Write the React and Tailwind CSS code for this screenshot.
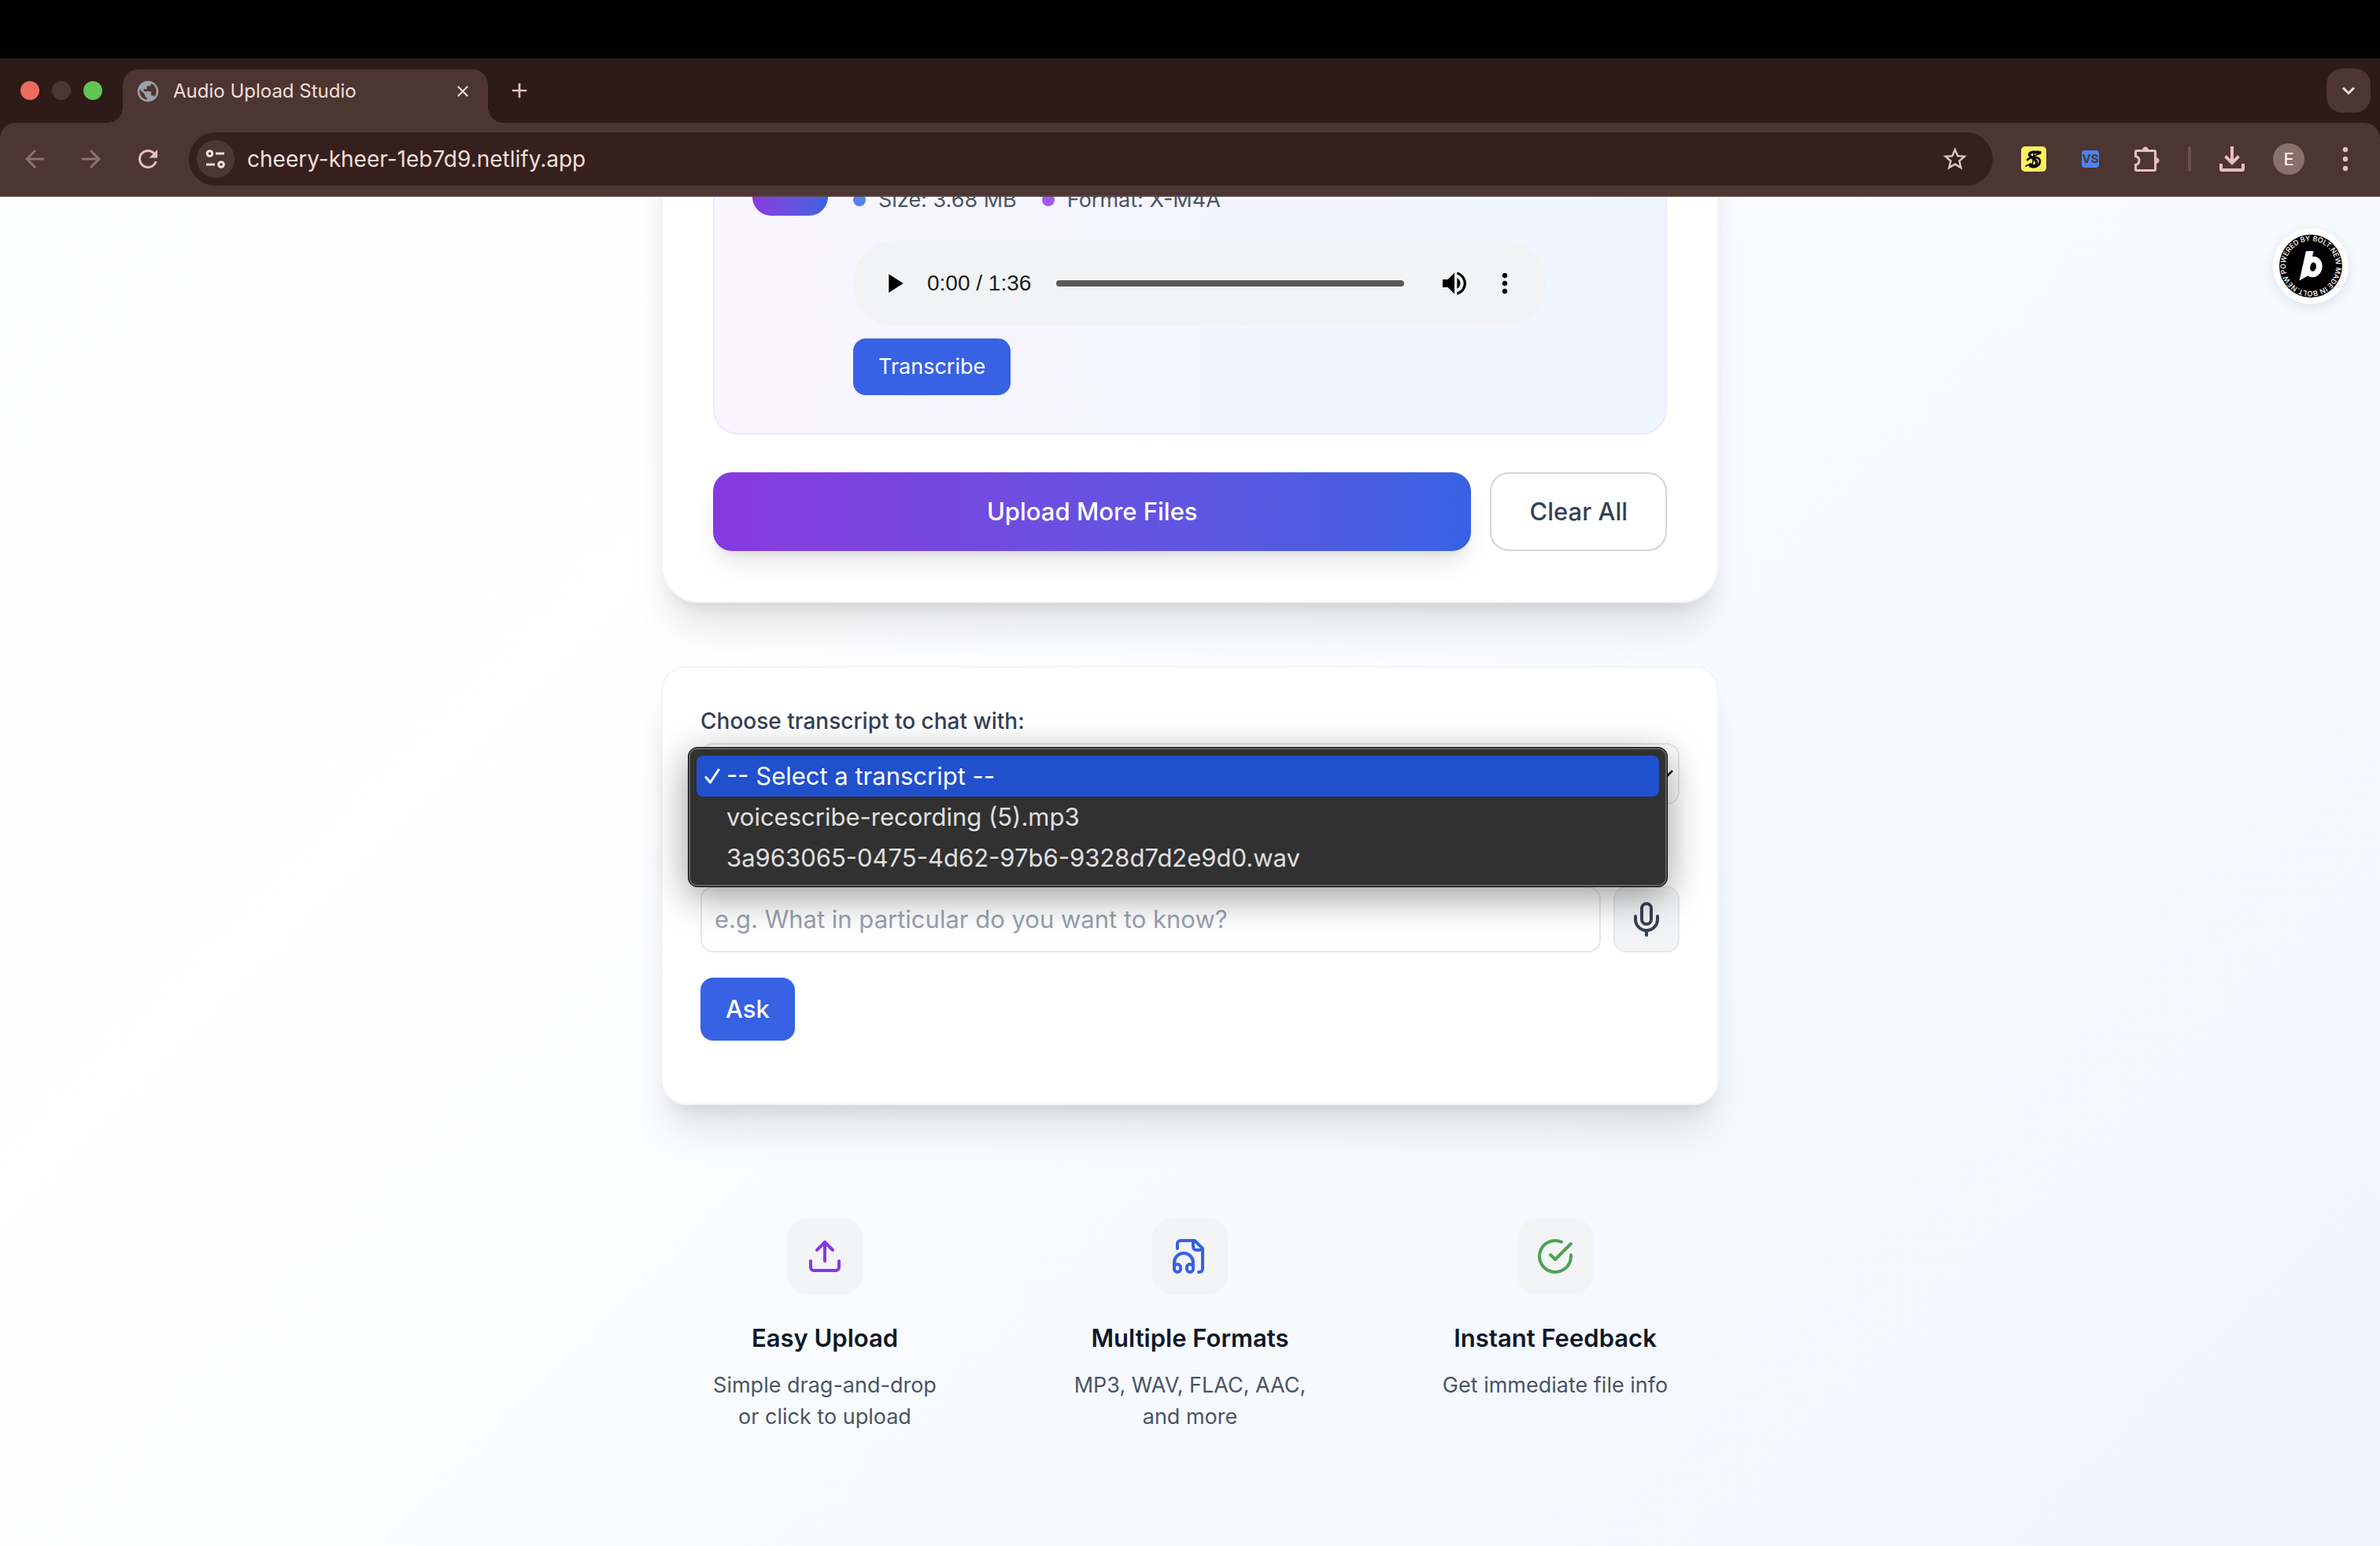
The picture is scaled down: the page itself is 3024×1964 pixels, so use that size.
import { useState } from "react";
import {
  MdAdd,
  MdArrowBack,
  MdArrowForward,
  MdClose,
  MdMoreVert,
  MdPlayArrow,
  MdPublic,
  MdRefresh,
  MdStarBorder,
  MdVolumeUp,
} from "react-icons/md";

const transcripts = [
  "-- Select a transcript --",
  "voicescribe-recording (5).mp3",
  "3a963065-0475-4d62-97b6-9328d7d2e9d0.wav",
];

function LineIcon({ className, children }) {
  return (
    <svg
      viewBox="0 0 24 24"
      fill="none"
      stroke="currentColor"
      strokeWidth="2"
      strokeLinecap="round"
      strokeLinejoin="round"
      className={className}
      aria-hidden="true"
    >
      {children}
    </svg>
  );
}

const features = [
  {
    title: "Easy Upload",
    lines: ["Simple drag-and-drop", "or click to upload"],
    icon: (
      <LineIcon className="size-12 text-[#8838e0]">
        <path d="M21 15v4a2 2 0 0 1-2 2H5a2 2 0 0 1-2-2v-4" />
        <path d="M17 8l-5-5-5 5" />
        <path d="M12 3v12" />
      </LineIcon>
    ),
  },
  {
    title: "Multiple Formats",
    lines: ["MP3, WAV, FLAC, AAC,", "and more"],
    icon: (
      <LineIcon className="size-12 text-[#3762e3]">
        <path d="M17.5 22h.5a2 2 0 0 0 2-2V7l-5-5H6a2 2 0 0 0-2 2v3" />
        <path d="M14 2v4a2 2 0 0 0 2 2h4" />
        <path d="M2 19a2 2 0 1 1 4 0v1a2 2 0 1 1-4 0v-4a6 6 0 0 1 12 0v4a2 2 0 1 1-4 0v-1a2 2 0 1 1 4 0" />
      </LineIcon>
    ),
  },
  {
    title: "Instant Feedback",
    lines: ["Get immediate file info"],
    icon: (
      <LineIcon className="size-12 text-[#4ea354]">
        <path d="M22 11.08V12a10 10 0 1 1-5.93-9.14" />
        <path d="m9 11 3 3L22 4" />
      </LineIcon>
    ),
  },
];

function TabStrip() {
  return (
    <div className="flex h-[82px] items-end pl-[26px] pr-3">

      {/* WINDOW BUTTONS */}
      <div className="flex items-center gap-4 self-center">
        <button aria-label="Close window" className="size-6 rounded-full bg-[#ed6a5e]" />
        <button aria-label="Minimize window" className="size-6 rounded-full bg-[#4a3735]" />
        <button aria-label="Zoom window" className="size-6 rounded-full bg-[#61c554]" />
      </div>

      {/* ACTIVE TAB */}
      <span className="ml-1.5 size-5 bg-[radial-gradient(circle_at_0_0,transparent_20px,#4d3531_20px)]" />
      <div className="flex h-[68px] w-[464px] items-center rounded-t-[20px] bg-[#4d3531] pb-3 pl-4 pr-5">
        <MdPublic className="size-8 text-[#9aa0a6]" />
        <span className="ml-4 flex-1 text-[24px] leading-8 text-[#f3dfdb]">
          Audio Upload Studio
        </span>
        <button aria-label="Close tab" className="text-[#f3dfdb]">
          <MdClose className="size-6" />
        </button>
      </div>
      <span className="size-5 bg-[radial-gradient(circle_at_100%_0,transparent_20px,#4d3531_20px)]" />

      <button aria-label="New tab" className="ml-1 self-center text-[#e6c1ba]">
        <MdAdd className="size-8" />
      </button>

      <button
        aria-label="Search tabs"
        className="ml-auto flex size-14 items-center justify-center self-center rounded-[20px] bg-[#4d3531] text-[#f3dfdb]"
      >
        <svg viewBox="0 0 20 20" fill="none" stroke="currentColor" strokeWidth="3" className="size-5">
          <path d="M3 6.5l7 7 7-7" />
        </svg>
      </button>
    </div>
  );
}

function Toolbar() {
  return (
    <div className="flex h-[94px] items-center rounded-t-[20px] border-b-2 border-[#544543] bg-[#4d3531] px-[26px] text-[#e6c1ba]">
      <div className="flex items-center gap-9">
        <button aria-label="Back" className="text-[#8d716c]">
          <MdArrowBack className="size-9" />
        </button>
        <button aria-label="Forward" className="text-[#8d716c]">
          <MdArrowForward className="size-9" />
        </button>
        <button aria-label="Reload">
          <MdRefresh className="size-9" />
        </button>
      </div>

      {/* ADDRESS BAR */}
      <div className="ml-[34px] flex h-[68px] flex-1 items-center rounded-full bg-[#36201e] pl-2.5 pr-[30px] text-[#f3dfdb]">
        <button
          aria-label="Site information"
          className="flex size-12 items-center justify-center rounded-full bg-[#4d3531]"
        >
          <svg viewBox="0 0 26 26" fill="none" stroke="currentColor" strokeWidth="3" className="size-[26px]">
            <circle cx="5.5" cy="6" r="3.3" />
            <path d="M13 6h11M1 20h11" />
            <circle cx="20" cy="20" r="3.3" />
          </svg>
        </button>
        <input
          aria-label="Address"
          readOnly
          value="cheery-kheer-1eb7d9.netlify.app"
          className="ml-4 flex-1 bg-transparent text-[28px] leading-10 outline-none"
        />
        <button aria-label="Bookmark this page" className="text-[#dbc7c4]">
          <MdStarBorder className="size-9" />
        </button>
      </div>

      {/* EXTENSIONS */}
      <div className="ml-9 flex items-center gap-10">
        <button aria-label="Scribe extension">
          <svg viewBox="0 0 32 32" className="size-8">
            <rect width="32" height="32" rx="5" fill="#fcee62" />
            <g fill="none" stroke="#0b0b0b" strokeLinecap="round">
              <path d="M24 8c-5 1-9-3-13 1-3 4 9 7 9 12 0 4-6 5-8 2" strokeWidth="3.4" />
              <path d="M8 17c5-5 16-4 16 2 0 5-6 9-13 6" strokeWidth="2.6" />
              <path d="M17 6l-3 19M12 14l12-5M6 25l6-3M20 6l5 1" strokeWidth="1.6" />
            </g>
          </svg>
        </button>
        <button aria-label="VS extension" className="flex size-8 items-center justify-center">
          <span className="flex size-[22px] items-center justify-center rounded-[4px] bg-[#4a83f2] text-[15px] leading-5 font-bold text-[#4d3531]">
            VS
          </span>
        </button>
        <button aria-label="Extensions">
          <svg viewBox="0 0 32 32" fill="none" stroke="currentColor" strokeWidth="3" className="size-8">
            <path d="M1.5 12.5V7Q1.5 5.5 3 5.5H25Q26.5 5.5 26.5 7V29Q26.5 30.5 25 30.5H3Q1.5 30.5 1.5 29V23.5C7.5 22 7.5 14 1.5 12.5Z" />
            <path d="M10 5a4 4.5 0 0 1 8 0zM27 14a4.5 4 0 0 1 0 8z" fill="currentColor" stroke="none" />
          </svg>
        </button>
      </div>
      <span className="mx-9 h-8 w-1 rounded-full bg-[#6b514d]" />
      <button aria-label="Downloads">
        <svg viewBox="0 0 32 32" fill="none" stroke="currentColor" strokeWidth="4" className="size-8">
          <path d="M16 0v20M7.5 12.5l8.5 8.5 8.5-8.5M2 22v6.5q0 1.5 1.5 1.5h25q1.5 0 1.5-1.5V22" />
        </svg>
      </button>
      <button
        aria-label="Profile"
        className="ml-9 flex size-10 items-center justify-center rounded-full bg-[#897069] text-[22px] leading-8 text-white"
      >
        E
      </button>
      <button aria-label="Browser menu" className="ml-[34px] flex w-9 justify-center">
        <svg viewBox="0 0 8 32" fill="currentColor" className="h-8 w-2">
          <circle cx="4" cy="4" r="3.2" />
          <circle cx="4" cy="16" r="3.2" />
          <circle cx="4" cy="28" r="3.2" />
        </svg>
      </button>
    </div>
  );
}

function AudioPlayer() {
  return (
    <div className="flex h-[108px] w-full max-w-[880px] items-center rounded-full bg-[#f1f3f4] px-8 text-black">
      <button aria-label="Play">
        <MdPlayArrow className="size-10" />
      </button>
      <span className="ml-[22px] font-['Liberation_Sans',sans-serif] text-[28px] leading-10 text-[#1c1c1c]">
        0:00 / 1:36
      </span>
      <input
        type="range"
        aria-label="Seek"
        defaultValue={0}
        className="ml-8 h-2 min-w-0 flex-1 appearance-none rounded-full bg-[#5a5a5a] [&::-webkit-slider-thumb]:appearance-none"
      />
      <button aria-label="Mute" className="ml-11">
        <MdVolumeUp className="size-10" />
      </button>
      <button aria-label="Player options" className="ml-6">
        <MdMoreVert className="size-10" />
      </button>
    </div>
  );
}

function UploadCard() {
  return (
    <section className="rounded-[48px] border-2 border-gray-100 bg-white p-16 shadow-[0_40px_50px_-10px_rgba(0,0,0,0.1),0_16px_20px_-12px_rgba(0,0,0,0.1)]">

      {/* FILE */}
      <div className="flex items-start gap-8 rounded-[32px] border-2 border-[#f0e7fe] bg-linear-to-r from-[#f9f5fe] to-[#eff5fe] p-12">
        <div className="size-24 shrink-0 rounded-3xl bg-linear-to-r from-[#8838e0] to-[#3762e3]" />
        <div className="flex-1 pt-14">
          <div className="flex items-center gap-8 text-[27px] leading-10 text-gray-600">
            <span className="flex items-center gap-4">
              <span className="size-4 rounded-full bg-[#4f83ed]" />
              Size: 3.68 MB
            </span>
            <span className="flex items-center gap-4">
              <span className="size-4 rounded-full bg-[#9e5af0]" />
              Format: X-M4A
            </span>
          </div>
          <div className="mt-8">
            <AudioPlayer />
          </div>
          <button className="mt-4 rounded-2xl bg-[#3762e3] px-8 py-4 text-[27px] leading-10 text-white">
            Transcribe
          </button>
        </div>
      </div>

      {/* ACTIONS */}
      <div className="mt-12 flex gap-6 text-[31px] leading-12 font-medium">
        <button className="flex-1 rounded-3xl bg-linear-to-r from-[#8838e0] to-[#3762e3] text-white shadow-[0_20px_30px_-6px_rgba(0,0,0,0.1),0_8px_12px_-8px_rgba(0,0,0,0.1)]">
          Upload More Files
        </button>
        <button className="rounded-3xl border-2 border-gray-300 px-12 py-6 text-gray-700">
          Clear All
        </button>
      </div>
    </section>
  );
}

function ChatCard() {
  const [selected, setSelected] = useState(transcripts[0]);

  return (
    <section className="mt-20 rounded-[32px] border-2 border-gray-100 bg-white px-12 pt-12 pb-20 shadow-[0_40px_50px_-10px_rgba(0,0,0,0.1),0_16px_20px_-12px_rgba(0,0,0,0.1)]">
      <label htmlFor="transcript" className="block text-[28px] leading-10 font-medium text-gray-700">
        Choose transcript to chat with:
      </label>

      <div className="relative mt-2">
        <select
          id="transcript"
          value={selected}
          onChange={(e) => setSelected(e.target.value)}
          className="h-[78px] w-full appearance-none rounded-2xl border-2 border-gray-200 bg-white px-4 text-[31px]"
        >
          {transcripts.map((name) => (
            <option key={name}>{name}</option>
          ))}
        </select>
        <svg
          viewBox="0 0 20 12"
          fill="none"
          stroke="black"
          strokeWidth="2.5"
          className="pointer-events-none absolute top-[34px] right-2 h-3 w-5"
        >
          <path d="M1 1l9 9 9-9" />
        </svg>

        {/* OPEN MENU */}
        <ul
          role="listbox"
          aria-label="Transcripts"
          className="absolute top-[5px] right-[15px] -left-4 z-10 rounded-xl border border-black bg-[#313131] p-2.5 text-[31px] leading-[52px] text-[#e0e0e0] shadow-[0_12px_48px_rgba(0,0,0,0.4)] inset-ring-2 inset-ring-[#636363]"
        >
          {transcripts.map((name) => (
            <li
              key={name}
              role="option"
              aria-selected={name === selected}
              onClick={() => setSelected(name)}
              className="flex items-center gap-2 rounded-lg pl-2.5 aria-selected:bg-[#2050cc] aria-selected:text-white"
            >
              <svg
                viewBox="0 0 20 20"
                fill="none"
                stroke={name === selected ? "currentColor" : "none"}
                strokeWidth="3"
                strokeLinecap="round"
                strokeLinejoin="round"
                className="size-5"
              >
                <path d="M2 11.5l5.5 6.5L18 2" />
              </svg>
              {name}
            </li>
          ))}
        </ul>
      </div>

      {/* QUESTION */}
      <div className="mt-26 flex gap-4">
        <input
          type="text"
          aria-label="Question"
          placeholder="e.g. What in particular do you want to know?"
          className="min-w-0 flex-1 rounded-2xl border-2 border-gray-200 px-4 text-[31px] leading-12 placeholder:text-gray-400"
        />
        <button
          aria-label="Record question"
          className="rounded-2xl border-2 border-gray-200 bg-gray-100 p-4 text-gray-700"
        >
          <LineIcon className="size-12">
            <path d="M12 2a3 3 0 0 0-3 3v7a3 3 0 0 0 6 0V5a3 3 0 0 0-3-3Z" />
            <path d="M19 10v2a7 7 0 0 1-14 0v-2" />
            <path d="M12 19v3" />
          </LineIcon>
        </button>
      </div>

      <button className="mt-8 block rounded-2xl bg-[#3762e3] px-8 py-4 text-[31px] leading-12 font-medium text-white">
        Ask
      </button>
    </section>
  );
}

function BoltBadge() {
  return (
    <a
      href="#"
      aria-label="Made in Bolt.new"
      className="absolute top-10 right-10 flex size-24 items-center justify-center rounded-full bg-white shadow-[0_4px_16px_rgba(0,0,0,0.1)]"
    >
      <svg viewBox="0 0 80 80" className="size-20">
        <circle cx="40" cy="40" r="40" fill="black" />
        <path id="ring" d="M9.4 49.4A32 32 0 1 1 70.6 30.6A32 32 0 1 1 9.4 49.4" fill="none" />
        <text fill="white" fontSize="9" fontWeight="500" fontFamily="Inter, sans-serif">
          <textPath href="#ring">POWERED BY BOLT.NEW MADE IN BOLT.NEW</textPath>
        </text>
        {/* bolt mark */}
        <path d="M34 21h9.5L37 52 25.5 58.5z" fill="white" />
        <ellipse cx="43" cy="41" rx="7.8" ry="9.5" fill="none" stroke="white" strokeWidth="7.5" transform="rotate(12 43 41)" />
      </svg>
    </a>
  );
}

export default function App() {
  return (
    <div className="flex h-screen flex-col bg-black pt-[74px] font-['Inter',sans-serif]">
      <header className="bg-[#2e1a17]">
        <TabStrip />
        <Toolbar />
      </header>

      <main className="relative min-h-0 flex-1 overflow-hidden bg-[linear-gradient(135deg,#fcfdff_0%,#ffffff_27%,#f9fbff_52%,#f0f5fe_100%)]">
        <BoltBadge />

        {/* scrolled page content */}
        <div className="mx-auto -mt-47 max-w-[1344px]">
          <UploadCard />
          <ChatCard />

          <div className="mt-24 grid grid-cols-3 gap-12">
            {features.map((feature) => (
              <div key={feature.title} className="flex flex-col items-center py-12 text-center">
                <div className="flex size-24 items-center justify-center rounded-3xl bg-gray-100">
                  {feature.icon}
                </div>
                <h3 className="mt-8 text-[31px] leading-12 font-semibold text-gray-900">
                  {feature.title}
                </h3>
                <p className="mt-4 text-[27px] leading-10 text-gray-600">
                  {feature.lines.map((line) => (
                    <span key={line} className="block">
                      {line}
                    </span>
                  ))}
                </p>
              </div>
            ))}
          </div>
        </div>
      </main>
    </div>
  );
}
